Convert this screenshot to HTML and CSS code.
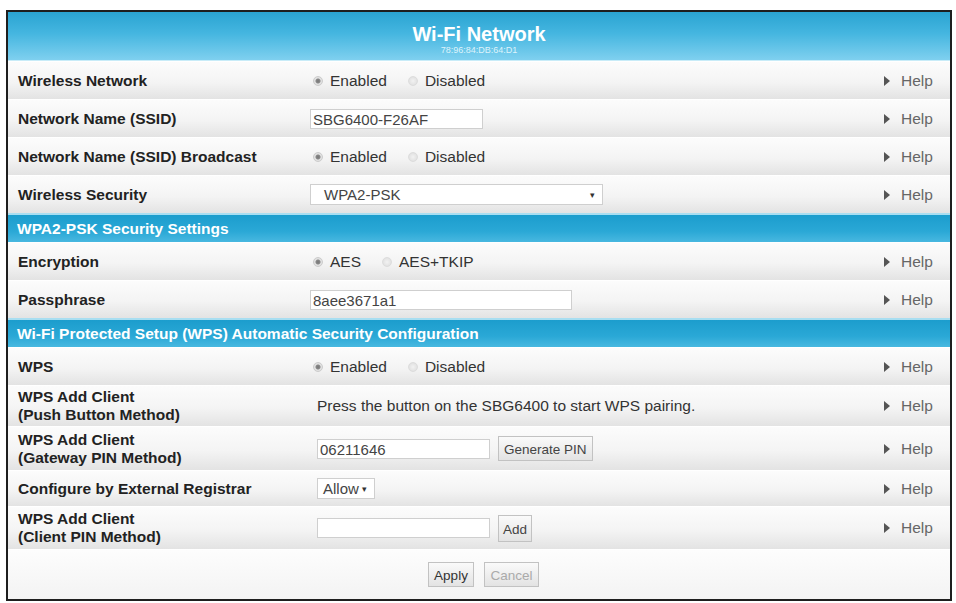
FILE: index.html
```html
<!DOCTYPE html>
<html lang="en">
<head>
  <meta charset="UTF-8" />
  <title>Wi-Fi Network</title>
  <meta name="viewport" content="width=device-width, initial-scale=1.0">
  <link rel="stylesheet" href="styles.css">
</head>
<body>
  <div class="panel">
    <!-- Title bar -->
    <div class="title">
      <div class="title-main">Wi-Fi Network</div>
      <div class="title-mac">78:96:84:DB:64:D1</div>
    </div>

    <div class="row">
      <div class="label">Wireless Network</div>
      <div class="field">
        <label class="opt"><span class="radio on"></span>Enabled</label>
        <label class="opt"><span class="radio"></span>Disabled</label>
      </div>
      <a class="help" href="#"><span class="arrow"></span>Help</a>
    </div>

    <div class="row">
      <div class="label">Network Name (SSID)</div>
      <div class="field"><span class="text-box ssid">SBG6400-F26AF</span></div>
      <a class="help" href="#"><span class="arrow"></span>Help</a>
    </div>

    <div class="row">
      <div class="label">Network Name (SSID) Broadcast</div>
      <div class="field">
        <label class="opt"><span class="radio on"></span>Enabled</label>
        <label class="opt"><span class="radio"></span>Disabled</label>
      </div>
      <a class="help" href="#"><span class="arrow"></span>Help</a>
    </div>

    <div class="row">
      <div class="label">Wireless Security</div>
      <div class="field"><span class="select security">WPA2-PSK<span class="caret">▾</span></span></div>
      <a class="help" href="#"><span class="arrow"></span>Help</a>
    </div>

    <div class="section">WPA2-PSK Security Settings</div>

    <div class="row">
      <div class="label">Encryption</div>
      <div class="field">
        <label class="opt"><span class="radio on"></span>AES</label>
        <label class="opt"><span class="radio"></span>AES+TKIP</label>
      </div>
      <a class="help" href="#"><span class="arrow"></span>Help</a>
    </div>

    <div class="row">
      <div class="label">Passphrase</div>
      <div class="field"><span class="text-box pass">8aee3671a1</span></div>
      <a class="help" href="#"><span class="arrow"></span>Help</a>
    </div>

    <div class="section">Wi-Fi Protected Setup (WPS) Automatic Security Configuration</div>

    <div class="row">
      <div class="label">WPS</div>
      <div class="field">
        <label class="opt"><span class="radio on"></span>Enabled</label>
        <label class="opt"><span class="radio"></span>Disabled</label>
      </div>
      <a class="help" href="#"><span class="arrow"></span>Help</a>
    </div>

    <div class="row push">
      <div class="label">WPS Add Client<br>(Push Button Method)</div>
      <div class="field shift">Press the button on the SBG6400 to start WPS pairing.</div>
      <a class="help" href="#"><span class="arrow"></span>Help</a>
    </div>

    <div class="row gateway">
      <div class="label">WPS Add Client<br>(Gateway PIN Method)</div>
      <div class="field shift">
        <span class="text-box pin">06211646</span>
        <span class="btn">Generate PIN</span>
      </div>
      <a class="help" href="#"><span class="arrow"></span>Help</a>
    </div>

    <div class="row registrar">
      <div class="label">Configure by External Registrar</div>
      <div class="field shift"><span class="select allow">Allow<span class="caret">▾</span></span></div>
      <a class="help" href="#"><span class="arrow"></span>Help</a>
    </div>

    <div class="row client">
      <div class="label">WPS Add Client<br>(Client PIN Method)</div>
      <div class="field shift">
        <span class="text-box pin"></span>
        <span class="btn add">Add</span>
      </div>
      <a class="help" href="#"><span class="arrow"></span>Help</a>
    </div>

    <div class="actions">
      <span class="btn apply">Apply</span>
      <span class="btn off">Cancel</span>
    </div>
  </div>
</body>
</html>
```

FILE: styles.css
```css
body {
  margin: 0;
  background: #fff;
  font-family: 'Liberation Sans', Arial, sans-serif;
  font-size: 15.5px;
  color: #333;
}

.panel {
  margin: 10px 4px 0 6px;
  border: 2px solid #1e1e1e;
  background: #f6f6f6;
}

/* Title bar */
.title {
  height: 48px;
  background: linear-gradient(to bottom, #2aa4d2 0%, #45b6e0 45%, #7fd0ef 100%);
  border-bottom: 1px solid #c9ecf8;
  color: #fff;
  text-align: center;
}

.title-main {
  padding-top: 12px;
  font-size: 20px;
  font-weight: bold;
  line-height: 21px;
}

.title-mac {
  font-size: 9px;
  line-height: 11px;
  color: #def3fb;
}

/* Form rows */
.row {
  display: grid;
  grid-template-columns: 292px 1fr 66px;
  align-items: center;
  height: 37px;
  padding-left: 10px;
  border-top: 1px solid #fff;
  background: linear-gradient(to bottom, #fcfcfc 0%, #f4f4f4 55%, #e3e3e3 100%);
}

.row.push      { height: 40px; }
.row.gateway   { height: 43px; }
.row.registrar { height: 35px; }
.row.client    { height: 42px; }

.label {
  font-weight: bold;
  color: #222;
  line-height: 18px;
}

.field {
  display: flex;
  align-items: center;
  gap: 8px;
}

.field.shift {
  padding-left: 7px;
}

.opt {
  display: flex;
  align-items: center;
  margin-right: 10px;
}

.radio {
  width: 10px;
  height: 10px;
  margin: 0 7px 0 3px;
  border-radius: 50%;
  border: 1px solid #ddd;
  background: radial-gradient(circle, #f2f2f2 0%, #dcdcdc 100%);
  box-sizing: border-box;
}

.radio.on {
  background: radial-gradient(circle, #777 0, #888 2px, #e4e4e4 3px, #d6d6d6 100%);
  border-color: #ccc;
}

.text-box {
  height: 20px;
  line-height: 20px;
  padding: 0 2px;
  box-sizing: border-box;
  border: 1px solid #cfcfcf;
  background: #fff;
  font-size: 15px;
  color: #444;
}

.ssid { width: 173px; }
.pass { width: 262px; }
.pin  { width: 173px; }

.select {
  display: flex;
  justify-content: space-between;
  align-items: center;
  height: 21px;
  padding: 0 7px 0 5px;
  box-sizing: border-box;
  border: 1px solid #cfcfcf;
  background: #fff;
  font-size: 15px;
  color: #444;
}

.security {
  width: 293px;
  padding-left: 13px;
}

.allow {
  width: 58px;
}

.caret {
  font-size: 9px;
  color: #333;
}

.btn {
  display: inline-block;
  height: 25px;
  line-height: 25px;
  padding: 0 5px;
  box-sizing: border-box;
  border: 1px solid #c2c2c2;
  background: linear-gradient(to bottom, #fafafa, #e3e3e3);
  font-size: 13.5px;
  color: #444;
}

.btn.add {
  height: 27px;
  line-height: 27px;
  padding: 0 4px;
}

.btn.off {
  color: #aaa;
  width: 55px;
  text-align: center;
}

.btn.apply {
  width: 46px;
  text-align: center;
  color: #333;
}

.help {
  display: flex;
  align-items: center;
  color: #666;
  text-decoration: none;
  font-size: 15.5px;
}

.arrow {
  width: 0;
  height: 0;
  margin-right: 11px;
  border-top: 5px solid transparent;
  border-bottom: 5px solid transparent;
  border-left: 6px solid #555;
}

/* Blue section bars */
.section {
  height: 27px;
  line-height: 27px;
  padding-left: 9px;
  border-top: 2px solid #a8def1;
  background: linear-gradient(to bottom, #1c9dcd 0%, #2aa8d6 60%, #48b8e0 100%);
  color: #fff;
  font-weight: bold;
  font-size: 15.5px;
}

/* Apply / Cancel */
.actions {
  display: flex;
  justify-content: center;
  align-items: center;
  gap: 10px;
  height: 49px;
  padding-left: 9px;
  border-top: 1px solid #fff;
  background: linear-gradient(to bottom, #fdfdfd, #f3f3f3);
}
```
